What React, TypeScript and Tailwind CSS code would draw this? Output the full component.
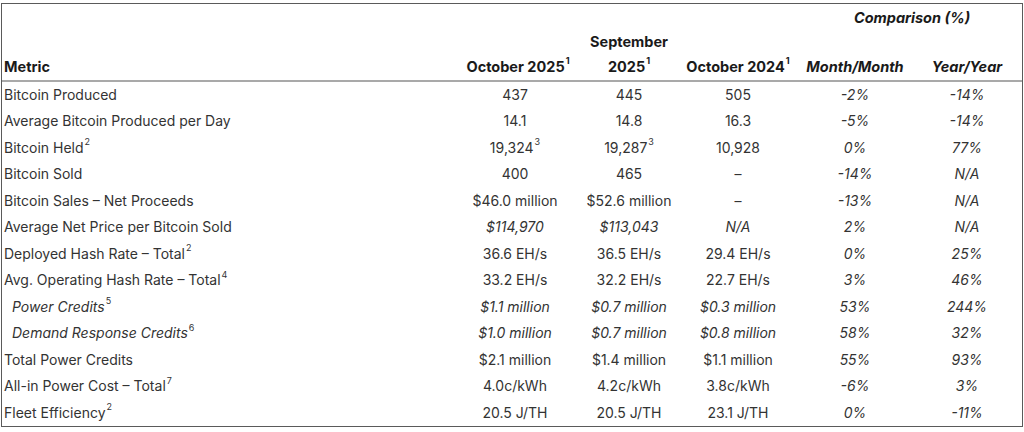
import type { ReactNode } from 'react';

// ── Data ─────────────────────────────────────────────────────────────────────

type Cell = { v: string; sup?: string };

interface Row {
  label: string;
  sup?: string;
  sub?: boolean; // indented italic sub-row
  italicValues?: boolean;
  cells: [Cell, Cell, Cell];
  mom: string;
  yoy: string;
}

const rows: Row[] = [
  { label: 'Bitcoin Produced', cells: [{ v: '437' }, { v: '445' }, { v: '505' }], mom: '-2%', yoy: '-14%' },
  { label: 'Average Bitcoin Produced per Day', cells: [{ v: '14.1' }, { v: '14.8' }, { v: '16.3' }], mom: '-5%', yoy: '-14%' },
  { label: 'Bitcoin Held', sup: '2', cells: [{ v: '19,324', sup: '3' }, { v: '19,287', sup: '3' }, { v: '10,928' }], mom: '0%', yoy: '77%' },
  { label: 'Bitcoin Sold', cells: [{ v: '400' }, { v: '465' }, { v: '–' }], mom: '-14%', yoy: 'N/A' },
  { label: 'Bitcoin Sales – Net Proceeds', cells: [{ v: '$46.0 million' }, { v: '$52.6 million' }, { v: '–' }], mom: '-13%', yoy: 'N/A' },
  { label: 'Average Net Price per Bitcoin Sold', italicValues: true, cells: [{ v: '$114,970' }, { v: '$113,043' }, { v: 'N/A' }], mom: '2%', yoy: 'N/A' },
  { label: 'Deployed Hash Rate – Total', sup: '2', cells: [{ v: '36.6 EH/s' }, { v: '36.5 EH/s' }, { v: '29.4 EH/s' }], mom: '0%', yoy: '25%' },
  { label: 'Avg. Operating Hash Rate – Total', sup: '4', cells: [{ v: '33.2 EH/s' }, { v: '32.2 EH/s' }, { v: '22.7 EH/s' }], mom: '3%', yoy: '46%' },
  { label: 'Power Credits', sup: '5', sub: true, italicValues: true, cells: [{ v: '$1.1 million' }, { v: '$0.7 million' }, { v: '$0.3 million' }], mom: '53%', yoy: '244%' },
  { label: 'Demand Response Credits', sup: '6', sub: true, italicValues: true, cells: [{ v: '$1.0 million' }, { v: '$0.7 million' }, { v: '$0.8 million' }], mom: '58%', yoy: '32%' },
  { label: 'Total Power Credits', cells: [{ v: '$2.1 million' }, { v: '$1.4 million' }, { v: '$1.1 million' }], mom: '55%', yoy: '93%' },
  { label: 'All-in Power Cost – Total', sup: '7', cells: [{ v: '4.0c/kWh' }, { v: '4.2c/kWh' }, { v: '3.8c/kWh' }], mom: '-6%', yoy: '3%' },
  { label: 'Fleet Efficiency', sup: '2', cells: [{ v: '20.5 J/TH' }, { v: '20.5 J/TH' }, { v: '23.1 J/TH' }], mom: '0%', yoy: '-11%' },
];

// ── Bits ─────────────────────────────────────────────────────────────────────

function Sup({ children }: { children: ReactNode }) {
  return <sup className="relative -top-[0.85em] ml-[1px] align-baseline text-[9px] not-italic">{children}</sup>;
}

// ── Page ─────────────────────────────────────────────────────────────────────

export default function App() {
  return (
    <div
      className="h-[432px] w-[1024px] bg-white pt-[3px] pl-[1px] text-[14px] text-[#333333]"
      style={{ fontFamily: 'Inter, "Liberation Sans", sans-serif' }}
    >
      <div className="w-[1022px] border border-[#5a5a5a]">
        <table className="w-full table-fixed border-collapse">
          <colgroup>
            <col className="w-[456px]" />
            <col className="w-[114px]" />
            <col className="w-[114px]" />
            <col className="w-[104px]" />
            <col className="w-[130px]" />
            <col />
          </colgroup>
          <thead className="text-[14.5px] font-bold leading-[25px] text-[#1a1a1a]">
            <tr className="h-[26px]">
              <th rowSpan={2} className="border-b-2 border-[#a9a9a9] pb-[1px] pl-[2px] text-left align-bottom">
                Metric
              </th>
              <th rowSpan={2} className="border-b-2 border-[#a9a9a9] pb-[1px] pl-[6px] text-center align-bottom">
                October 2025<Sup>1</Sup>
              </th>
              <th rowSpan={2} className="border-b-2 border-[#a9a9a9] pb-[1px] text-center align-bottom">
                September
                <br />
                2025<Sup>1</Sup>
              </th>
              <th rowSpan={2} className="border-b-2 border-[#a9a9a9] pb-[1px] text-center align-bottom">
                October 2024<Sup>1</Sup>
              </th>
              <th colSpan={2} className="pl-[12px] text-center align-middle italic">
                Comparison (%)
              </th>
            </tr>
            <tr className="h-[51px]">
              <th className="border-b-2 border-[#a9a9a9] pb-[1px] text-center align-bottom italic">Month/Month</th>
              <th className="border-b-2 border-[#a9a9a9] pb-[1px] pr-[8px] text-center align-bottom italic">
                Year/Year
              </th>
            </tr>
          </thead>
          <tbody>
            {rows.map((r) => (
              <tr key={r.label} className="h-[26.5px]">
                <td className={r.sub ? 'pl-[10px] italic' : 'pl-[2px]'}>
                  {r.label}
                  {r.sup && <Sup>{r.sup}</Sup>}
                </td>
                {r.cells.map((c, i) => (
                  <td key={i} className={r.italicValues ? 'text-center italic' : 'text-center'}>
                    {c.v}
                    {c.sup && <Sup>{c.sup}</Sup>}
                  </td>
                ))}
                <td className="text-center italic">{r.mom}</td>
                <td className="pr-[8px] text-center italic">{r.yoy}</td>
              </tr>
            ))}
          </tbody>
        </table>
      </div>
    </div>
  );
}
